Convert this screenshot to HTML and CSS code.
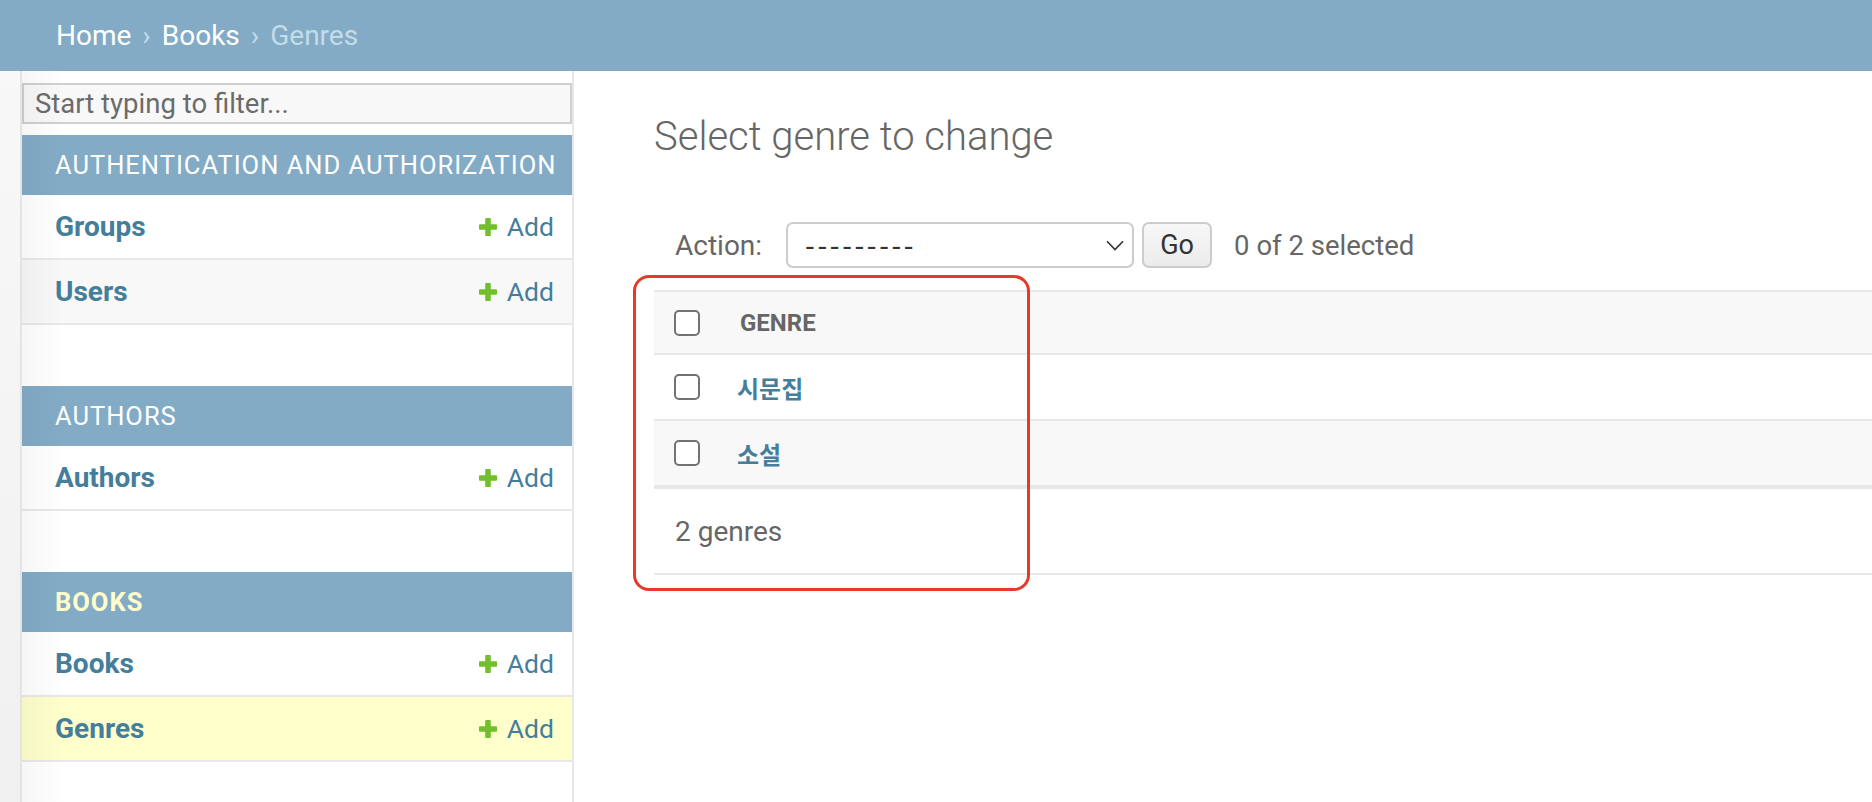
FILE: index.html
```html
<!DOCTYPE html>
<html lang="en">
<head>
<meta charset="utf-8">
<title>Select genre to change</title>
<link rel="stylesheet" href="styles.css">
</head>
<body>
<header class="breadcrumbs">
  <a href="#">Home</a><span class="sep">›</span><a href="#">Books</a><span class="sep">›</span><span class="current">Genres</span>
</header>
<div class="main">
  <div class="toggle"></div>
  <nav class="sidebar">
    <input class="filter" type="search" placeholder="Start typing to filter...">
    <div class="module">
      <div class="caption">Authentication and Authorization</div>
      <div class="row"><a class="model" href="#">Groups</a><a class="add" href="#"><svg class="plus" viewBox="0 0 20 20" width="20" height="20"><rect x="7.2" y="1" width="5.6" height="18" rx="1"/><rect x="1" y="7.2" width="18" height="5.6" rx="1"/></svg>Add</a></div>
      <div class="row alt"><a class="model" href="#">Users</a><a class="add" href="#"><svg class="plus" viewBox="0 0 20 20" width="20" height="20"><rect x="7.2" y="1" width="5.6" height="18" rx="1"/><rect x="1" y="7.2" width="18" height="5.6" rx="1"/></svg>Add</a></div>
    </div>
    <div class="module">
      <div class="caption">Authors</div>
      <div class="row"><a class="model" href="#">Authors</a><a class="add" href="#"><svg class="plus" viewBox="0 0 20 20" width="20" height="20"><rect x="7.2" y="1" width="5.6" height="18" rx="1"/><rect x="1" y="7.2" width="18" height="5.6" rx="1"/></svg>Add</a></div>
    </div>
    <div class="module">
      <div class="caption current">Books</div>
      <div class="row"><a class="model" href="#">Books</a><a class="add" href="#"><svg class="plus" viewBox="0 0 20 20" width="20" height="20"><rect x="7.2" y="1" width="5.6" height="18" rx="1"/><rect x="1" y="7.2" width="18" height="5.6" rx="1"/></svg>Add</a></div>
      <div class="row selected"><a class="model" href="#">Genres</a><a class="add" href="#"><svg class="plus" viewBox="0 0 20 20" width="20" height="20"><rect x="7.2" y="1" width="5.6" height="18" rx="1"/><rect x="1" y="7.2" width="18" height="5.6" rx="1"/></svg>Add</a></div>
    </div>
  </nav>
  <main class="content">
    <h1>Select genre to change</h1>
    <div class="actions">
      <label class="action-label">Action:</label>
      <div class="select"><span class="dashes">---------</span><svg class="chevron" viewBox="0 0 18 11" width="18" height="11"><path d="M1 1.2 L9 9.5 L17 1.2" fill="none" stroke="#333" stroke-width="1.6"/></svg></div>
      <button class="go" type="button">Go</button>
      <span class="counter">0 of 2 selected</span>
    </div>
    <div class="results">
      <div class="trow thead"><span class="cb"></span><span class="th">Genre</span></div>
      <div class="trow"><span class="cb"></span><a class="item" href="#">시문집</a></div>
      <div class="trow alt"><span class="cb"></span><a class="item" href="#">소설</a></div>
    </div>
    <p class="paginator">2 genres</p>
    <div class="highlight"></div>
  </main>
</div>
</body>
</html>
```
FILE: styles.css
```css
* { box-sizing: border-box; }
html, body { margin: 0; padding: 0; }
body {
  font-family: Roboto, "Noto Sans CJK KR", sans-serif;
  color: #333;
  background: #fff;
  width: 1872px;
  height: 802px;
  overflow: hidden;
}
a { text-decoration: none; }

.breadcrumbs {
  height: 71px;
  background: #83abc6;
  display: flex;
  align-items: center;
  padding-left: 56px;
  font-size: 28px;
  color: #c4dce8;
}
.breadcrumbs a { color: #fff; }
.breadcrumbs .sep { margin: 0 11px; }

.main { display: flex; height: 731px; }

.toggle {
  width: 22px;
  flex: none;
  background: linear-gradient(to bottom, #f8f8f8, #f0f0f0);
  border-right: 2px solid #e4e4e4;
}

.sidebar {
  width: 552px;
  flex: none;
  border-right: 2px solid #e8e8e8;
  padding-top: 12px;
  position: relative;
}
.sidebar::after {
  content: "";
  position: absolute;
  left: 0; top: 0; bottom: 0;
  width: 44px;
  background: linear-gradient(to right, rgba(0,0,0,0.035), rgba(0,0,0,0));
  pointer-events: none;
}

.filter {
  display: block;
  width: 100%;
  height: 41px;
  margin: 0 0 11px;
  padding: 0 11px;
  border: 2px solid #cfcfcf;
  background: #f8f8f8;
  font-family: Roboto, sans-serif;
  font-size: 27.5px;
  color: #333;
  outline: none;
}
.filter::placeholder { color: #6b6b6b; opacity: 1; }

.module { margin-bottom: 61px; }
.caption {
  height: 60px;
  background: #83abc6;
  color: #fff;
  font-size: 25.5px;
  letter-spacing: 1px;
  text-transform: uppercase;
  padding-left: 33px;
  display: flex;
  align-items: center;
}
.caption.current { color: #ffc; font-weight: 700; }

.row {
  height: 65px;
  border-bottom: 2px solid #e8e8e8;
  display: flex;
  align-items: center;
  justify-content: space-between;
  padding: 0 18px 0 33px;
  background: #fff;
}
.row.alt { background: #f8f8f8; }
.row.selected { background: #ffc; }
.model { font-size: 28px; font-weight: 700; color: #447e9b; }
.add {
  font-size: 26.5px;
  color: #447e9b;
  display: flex;
  align-items: center;
  gap: 9px;
}
.plus { fill: #70bf2b; display: block; }

.content {
  flex: 1;
  position: relative;
  padding: 42px 0 0 80px;
}
h1 {
  margin: 0 0 61px;
  font-size: 40px;
  font-weight: 300;
  line-height: 48px;
  color: #666;
}

.actions {
  display: flex;
  align-items: center;
  height: 46px;
  padding-left: 21px;
}
.action-label { font-size: 28px; color: #666; margin-right: 24px; }
.select {
  width: 348px;
  height: 46px;
  border: 2px solid #ccc;
  border-radius: 7px;
  display: flex;
  align-items: center;
  justify-content: space-between;
  padding: 0 8px 0 17px;
  background: #fff;
}
.dashes {
  font-family: "DejaVu Sans", sans-serif;
  font-size: 27px;
  letter-spacing: 2.6px;
  color: #333;
}
.chevron { display: block; }
.go {
  margin-left: 8px;
  width: 70px;
  height: 46px;
  border: 2px solid #ccc;
  border-radius: 7px;
  background: linear-gradient(#f7f7f7, #ececec);
  font-family: Roboto, sans-serif;
  font-size: 27px;
  color: #333;
  padding: 0;
}
.counter { margin-left: 22px; font-size: 27.5px; color: #666; }

.results { margin-top: 22px; }
.trow {
  height: 66px;
  border-bottom: 2px solid #e8e8e8;
  display: flex;
  align-items: center;
  padding-left: 20px;
  background: #fff;
}
.trow.thead {
  height: 65px;
  border-top: 2px solid #e8e8e8;
  background: #f8f8f8;
}
.trow.alt { background: #f8f8f8; }
.cb {
  width: 26px;
  height: 26px;
  border: 2px solid #727272;
  border-radius: 5px;
  background: #fff;
  flex: none;
  margin-right: 40px;
}
.th {
  font-size: 24px;
  font-weight: 700;
  color: #666;
  text-transform: uppercase;
}
.item {
  font-family: "Noto Sans CJK KR", sans-serif;
  font-size: 24px;
  font-weight: 700;
  color: #447e9b;
  margin-left: -3px;
}
.paginator {
  margin: 0;
  height: 88px;
  border-top: 2px solid #e8e8e8;
  border-bottom: 2px solid #e8e8e8;
  display: flex;
  align-items: center;
  padding-left: 21px;
  font-size: 28px;
  color: #666;
}

.highlight {
  position: absolute;
  left: 59px;
  top: 204px;
  width: 397px;
  height: 316px;
  border: 3px solid #e5392b;
  border-radius: 16px;
  pointer-events: none;
}
```
